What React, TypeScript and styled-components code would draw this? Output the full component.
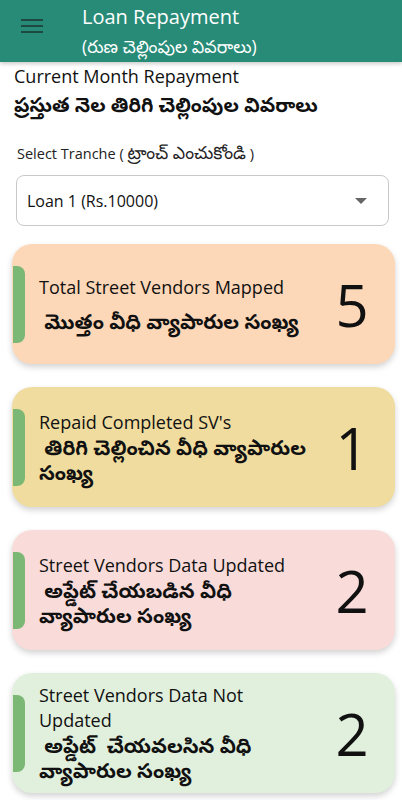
import styled, { createGlobalStyle } from 'styled-components';

const GlobalStyle = createGlobalStyle`
  body {
    margin: 0;
    background: #ffffff;
    font-family: "Open Sans", "Noto Sans", "Noto Sans Telugu", sans-serif;
    color: #111;
  }
`;

const Page = styled.div`
  width: 402px;
  min-height: 800px;
  overflow: hidden;
`;

const Header = styled.header`
  height: 62px;
  background: #288b78;
  display: flex;
  align-items: flex-start;
  box-shadow: 0 2px 4px rgba(0, 0, 0, 0.2);
`;

const MenuButton = styled.div`
  width: 82px;
  display: flex;
  padding: 18px 0 0 21px;
  box-sizing: border-box;
`;

const TitleBlock = styled.div`
  display: flex;
  flex-direction: column;
  color: #fff;
  padding-top: 5px;
`;

const Title = styled.div`
  font-size: 20px;
  line-height: 24px;
`;

const Subtitle = styled.div`
  font-size: 17.5px;
  line-height: 22px;
  margin-top: 6px;
`;

// telugu glyphs come out smaller than the english ones, bump them up
const Te = styled.span<{ $scale?: number }>`
  font-size: ${p => p.$scale ?? 1.2}em;
`;

const Content = styled.main`
  padding: 1px 7px 0 12px;
`;

const Heading = styled.div`
  font-size: 18px;
  line-height: 26px;
  padding-left: 2px;
`;

const HeadingTe = styled.div`
  font-size: 20px;
  font-weight: 700;
  line-height: 31px;
  padding-left: 2px;
`;

const Label = styled.div`
  font-size: 14.5px;
  line-height: 20px;
  color: #222;
  margin: 22px 0 0 5px;
`;

const SelectBox = styled.div`
  margin: 11px 6px 0 4px;
  height: 49px;
  border: 1px solid #c9c9c9;
  border-radius: 8px;
  display: flex;
  align-items: center;
  justify-content: space-between;
  padding: 0 21px 0 10px;
  font-size: 16px;
`;

const Caret = styled.div`
  width: 0;
  height: 0;
  border-left: 6px solid transparent;
  border-right: 6px solid transparent;
  border-top: 6px solid #666;
`;

const CardList = styled.div`
  display: flex;
  flex-direction: column;
  gap: 23px;
  margin-top: 18px;
`;

const Card = styled.div<{ $bg: string }>`
  height: 120px;
  background: ${p => p.$bg};
  border-radius: 20px;
  box-shadow: 0 3px 6px rgba(0, 0, 0, 0.18);
  display: flex;
  align-items: center;
`;

const Bar = styled.div`
  width: 12px;
  height: 77px;
  margin-left: 1px;
  background: #7cb875;
  border-radius: 0 8px 8px 0;
  flex-shrink: 0;
`;

const CardText = styled.div`
  flex: 1;
  padding-left: 14px;
  font-size: 18px;
  line-height: 25px;
`;

const TeLine = styled.div<{ $gap?: boolean }>`
  font-weight: 700;
  font-size: 20.5px;
  line-height: 25px;
  white-space: pre-wrap;
  margin-top: ${p => (p.$gap ? '9px' : '0')};
`;

const Count = styled.div`
  width: 82px;
  font-size: 58px;
  text-align: center;
  margin-right: 2px;
`;

const cards = [
  { bg: '#fdd8b8', en: 'Total Street Vendors Mapped', te: ' మొత్తం వీధి వ్యాపారుల సంఖ్య', n: 5, gap: true },
  { bg: '#f0dc9f', en: "Repaid Completed SV's", te: ' తిరిగి చెల్లించిన వీధి వ్యాపారుల సంఖ్య', n: 1 },
  { bg: '#f9dcd9', en: 'Street Vendors Data Updated', te: ' అప్డేట్ చేయబడిన వీధి వ్యాపారుల సంఖ్య', n: 2 },
  { bg: '#e1f0dd', en: 'Street Vendors Data Not Updated', te: ' అప్డేట్  చేయవలసిన వీధి వ్యాపారుల సంఖ్య', n: 2 },
];

export default function App() {
  return (
    <Page>
      <GlobalStyle />
      <Header>
        <MenuButton>
          <svg width="22" height="16" viewBox="0 0 22 16">
            <rect x="0" y="1" width="22" height="2" fill="#1c4a40" />
            <rect x="0" y="7" width="22" height="2" fill="#1c4a40" />
            <rect x="0" y="13" width="22" height="2" fill="#1c4a40" />
          </svg>
        </MenuButton>
        <TitleBlock>
          <Title>Loan Repayment</Title>
          <Subtitle>(రుణ చెల్లింపుల వివరాలు)</Subtitle>
        </TitleBlock>
      </Header>
      <Content>
        <Heading>Current Month Repayment</Heading>
        <HeadingTe>ప్రస్తుత నెల తిరిగి చెల్లింపుల వివరాలు</HeadingTe>
        <Label>
          Select Tranche ( <Te>ట్రాంచ్ ఎంచుకోండి</Te> )
        </Label>
        <SelectBox>
          <span>Loan 1 (Rs.10000)</span>
          <Caret />
        </SelectBox>
        <CardList>
          {cards.map(c => (
            <Card key={c.en} $bg={c.bg}>
              <Bar />
              <CardText>
                <div>{c.en}</div>
                <TeLine $gap={c.gap}>{c.te}</TeLine>
              </CardText>
              <Count>{c.n}</Count>
            </Card>
          ))}
        </CardList>
      </Content>
    </Page>
  );
}
